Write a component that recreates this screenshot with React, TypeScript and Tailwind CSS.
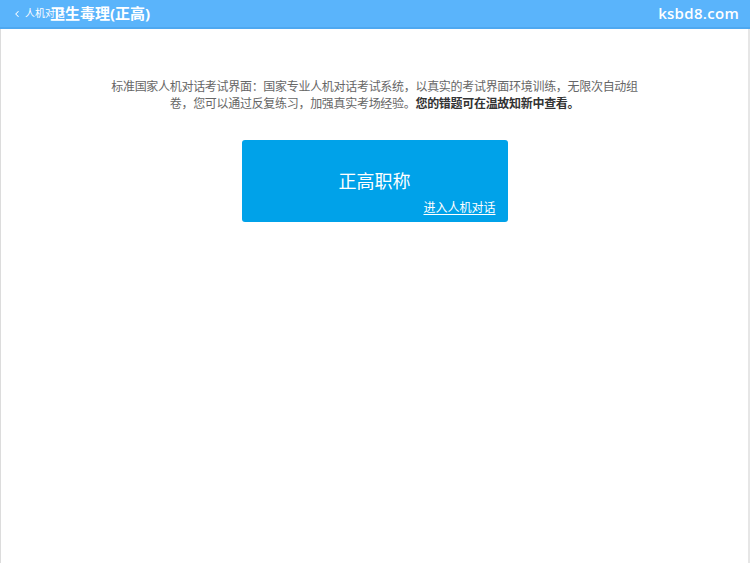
import { ChevronLeft } from 'lucide-react';

export default function App() {
  return (
    <div
      className="w-[750px] h-[563px] flex flex-col bg-white overflow-hidden"
      style={{ fontFamily: '"Open Sans", "Noto Sans CJK SC", sans-serif' }}
    >
      {/* header */}
      <div className="relative h-[29px] shrink-0 bg-[#5ab4fb] border-b-2 border-[#4ea8f0] flex items-center justify-between pl-[12px] pr-[11px]">
        <div className="flex items-center text-white text-[10px] gap-[3px]">
          <ChevronLeft className="w-[10px] h-[10px]" strokeWidth={2.5} />
          <span>人机对话</span>
        </div>
        <div className="absolute left-[50px] top-[2px] text-white text-[15px] font-bold leading-[22px]">
          卫生毒理(正高)
        </div>
        <div className="text-white text-[15px] font-semibold tracking-[0.3px]">ksbd8.com</div>
      </div>

      {/* body */}
      <div className="flex-1 border-l border-r-2 border-l-[#dcdcdc] border-r-[#e6e6e6] flex flex-col items-center">
        <p className="w-[560px] mt-[49px] text-center text-[12px] leading-[17px] tracking-[-0.3px] text-[#666]">
          标准国家人机对话考试界面：国家专业人机对话考试系统，以真实的考试界面环境训练，无限次自动组
          <br />
          卷，您可以通过反复练习，加强真实考场经验。<b className="text-[#333] font-bold">您的错题可在温故知新中查看。</b>
        </p>

        <div className="relative mt-[28px] w-[266px] h-[82px] rounded-[3px] bg-[#00a2e9] flex items-center justify-center text-white">
          <span className="text-[18px] leading-[24px]">正高职称</span>
          <span className="absolute right-[12px] bottom-[6px] text-[12px] leading-[16px] underline underline-offset-2 cursor-pointer">
            进入人机对话
          </span>
        </div>
      </div>
    </div>
  );
}
